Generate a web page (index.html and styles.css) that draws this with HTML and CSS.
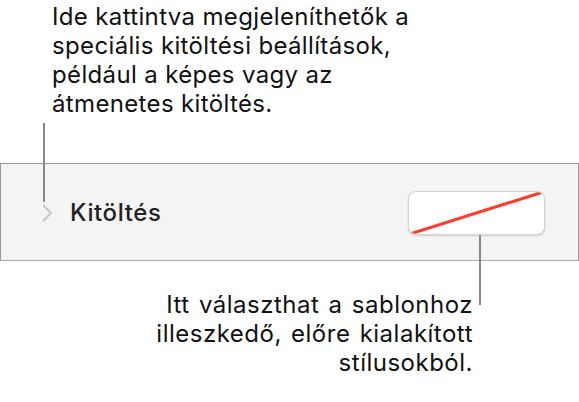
FILE: index.html
```html
<!DOCTYPE html>
<html lang="hu">
<head>
    <meta charset="UTF-8">
    <meta name="viewport" content="width=device-width, initial-scale=1.0">
    <title>Kitöltés</title>
    <link rel="stylesheet" href="styles.css">
</head>
<body>
    <div class="figure">
        <p class="note note-top">Ide kattintva megjeleníthetők a<br>speciális kitöltési beállítások,<br>például a képes vagy az<br>átmenetes kitöltés.</p>

        <div class="panel">
            <span class="chevron">
                <svg width="11" height="18" viewBox="0 0 11 18">
                    <polyline points="1.5,1.5 9,9 1.5,16.5" fill="none" stroke="#c6c6c6" stroke-width="2" stroke-linecap="round" stroke-linejoin="round"/>
                </svg>
            </span>
            <span class="label">Kitöltés</span>
            <div class="swatch">
                <svg width="137" height="44" viewBox="0 0 137 44">
                    <line x1="2" y1="43" x2="135" y2="1" stroke="#ff3b30" stroke-width="3"/>
                </svg>
            </div>
        </div>

        <p class="note note-bottom">Itt választhat a sablonhoz<br>illeszkedő, előre kialakított<br>stílusokból.</p>

        <!-- callout lines -->
        <span class="leader leader-left"></span>
        <span class="leader leader-right"></span>
    </div>
</body>
</html>
```

FILE: styles.css
```css
* {
    margin: 0;
    padding: 0;
    box-sizing: border-box;
}

body {
    background: #fff;
    font-family: Inter, "Noto Sans", sans-serif;
    color: #111;
}

.figure {
    position: relative;
    width: 579px;
    height: 402px;
}

.note {
    font-size: 24px;
    line-height: 29px;
    letter-spacing: 0.35px;
}

.note-top {
    padding: 2px 0 0 52px;
}

.note-bottom {
    margin-top: 29px;
    padding-right: 106px;
    text-align: right;
    letter-spacing: 0.5px;
    word-spacing: 2px;
}

.panel {
    margin-top: 45px;
    height: 98px;
    display: flex;
    align-items: center;
    background: #f4f4f4;
    border: 1px solid #999;
    border-bottom-color: #aaa;
    padding: 0 33px 0 41px;
}

.chevron {
    display: flex;
    margin-top: 1px;
}

.label {
    margin-left: 17px;
    font-size: 24px;
    font-weight: 500;
    letter-spacing: 0.6px;
    color: #222;
    flex: 1;
}

.swatch {
    width: 137px;
    height: 44px;
    background: #fff;
    border: 1px solid #d4d4d4;
    border-radius: 8px;
    box-shadow: 0 1px 2px rgba(0,0,0,0.15);
    overflow: hidden;
    margin-top: 2px;
}

.swatch svg {
    display: block;
    margin: -1px;
}

.leader {
    position: absolute;
    width: 2px;
    background: #888;
}

.leader-left {
    left: 43px;
    top: 123px;
    height: 79px;
}

.leader-right {
    left: 479px;
    top: 235px;
    height: 70px;
}
```
